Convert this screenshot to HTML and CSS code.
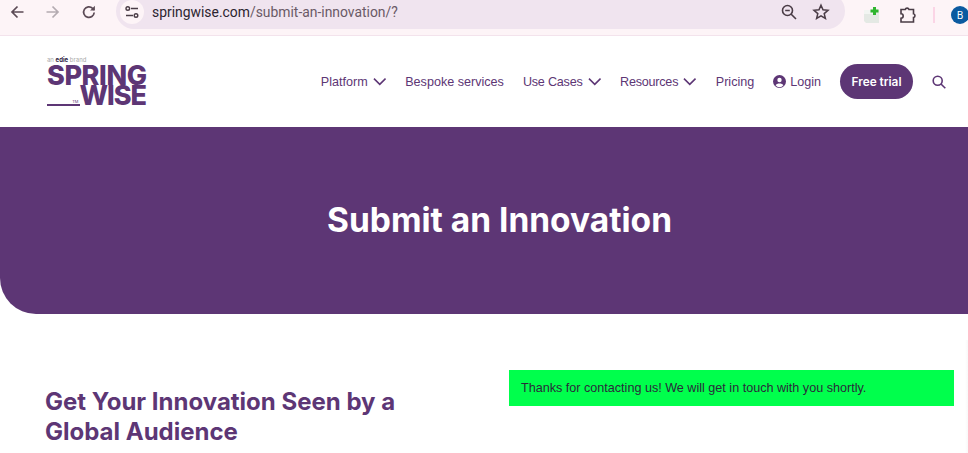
FILE: index.html
```html
<!DOCTYPE html>
<html>
<head>
  <title>Submit an Innovation</title>
  <link rel="stylesheet" href="styles.css">
</head>
<body>

  <!-- Browser toolbar -->
  <div class="toolbar">
    <svg class="tool-icon back" width="16" height="16" viewBox="0 0 16 16"><path d="M14.500 8H3M8.500 2.500 3 8l5.500 5.500" fill="none" stroke="#5b4a55" stroke-width="1.700"/></svg>
    <svg class="tool-icon forward" width="16" height="16" viewBox="0 0 16 16"><path d="M1.500 8H13M7.500 2.500 13 8l-5.500 5.500" fill="none" stroke="#b4abb1" stroke-width="1.700"/></svg>
    <svg class="tool-icon reload" width="16" height="16" viewBox="0 0 16 16"><path d="M13.200 8.500A5.300 5.300 0 1 1 11.600 4.300L13 5.800" fill="none" stroke="#5b4a55" stroke-width="1.700"/><path d="M13.900 1.800v4.800H9.100z" fill="#5b4a55"/></svg>
    <div class="address-bar">
      <span class="site-info">
        <svg width="16" height="16" viewBox="0 0 16 16"><g fill="none" stroke="#4a3c46" stroke-width="1.400"><path d="M7 4.500h7M2 11.500h7"/><circle cx="3.800" cy="4.500" r="1.800"/><circle cx="12" cy="11.500" r="1.800"/></g></svg>
      </span>
      <span class="url"><b>springwise.com</b>/submit-an-innovation/?</span>
      <svg class="bar-icon zoom-icon" width="18" height="18" viewBox="0 0 18 18"><g fill="none" stroke="#4a3c46" stroke-width="1.600"><circle cx="7.500" cy="7.500" r="5"/><path d="m11 11 5 5M5.200 7.500h4.600"/></g></svg>
      <svg class="bar-icon" width="18" height="18" viewBox="0 0 18 18"><path d="m9 2.200 2 4.600 5 .5-3.800 3.300 1.200 4.900L9 12.900l-4.400 2.600 1.200-4.900L2 7.300l5-.5z" fill="none" stroke="#4a3c46" stroke-width="1.500"/></svg>
    </div>
    <svg class="ext-icon" width="18" height="18" viewBox="0 0 18 18"><path d="M1 4h15v13H3l-2-2z" fill="#e4e9e4"/><path d="M1 4h9v4H1z" fill="#f2f5f2"/><path d="M10 1h3v2.500h2.500v3H13V9h-3V6.500H7.500v-3H10z" fill="#2fb52f"/></svg>
    <svg class="puzzle" width="18" height="18" viewBox="0 0 18 18"><path d="M2 3.500h4.200a2 2 0 0 1 3.800 0h4.500v4.300a1.900 1.900 0 0 1 0 3.700V16H2v-3.800a2.200 2.200 0 0 0 0-4.400z" fill="none" stroke="#4a3c46" stroke-width="1.600"/></svg>
    <span class="divider"></span>
    <span class="avatar">B</span>
  </div>

  <!-- Site header -->
  <header class="site-header">
    <a class="logo">
      <span class="logo-tag">an <b>edie</b> brand</span>
      <span class="logo-spring">SPRING</span>
      <span class="logo-bottom">
        <span class="logo-line"></span>
        <span class="logo-tm">TM</span>
        <span class="logo-wise">WISE</span>
      </span>
    </a>
    <nav class="main-nav">
      <a>Platform <svg class="chevron" width="13.500" height="9" viewBox="0 0 14 9"><path d="m1 1.500 6 6 6-6" fill="none" stroke="#5d3675" stroke-width="1.600"/></svg></a>
      <a>Bespoke services</a>
      <a class="tight">Use Cases <svg class="chevron" width="13.500" height="9" viewBox="0 0 14 9"><path d="m1 1.500 6 6 6-6" fill="none" stroke="#5d3675" stroke-width="1.600"/></svg></a>
      <a class="tight">Resources <svg class="chevron" width="13.500" height="9" viewBox="0 0 14 9"><path d="m1 1.500 6 6 6-6" fill="none" stroke="#5d3675" stroke-width="1.600"/></svg></a>
      <a>Pricing</a>
      <a class="login"><svg width="13" height="13" viewBox="0 0 13 13"><circle cx="6.500" cy="6.500" r="6.500" fill="#5d3675"/><circle cx="6.500" cy="5" r="2.200" fill="#fff"/><path d="M2.600 10.300c1-2.300 6.800-2.300 7.800 0a5 5 0 0 1-7.800 0z" fill="#fff"/></svg> Login</a>
      <a class="free-trial">Free trial</a>
      <svg class="search" width="14" height="14" viewBox="0 0 14 14"><g fill="none" stroke="#5d3675" stroke-width="1.600"><circle cx="5.700" cy="5.700" r="4.500"/><path d="m9 9 4.300 4.300"/></g></svg>
    </nav>
  </header>

  <section class="hero">
    <h1>Submit an Innovation</h1>
  </section>

  <main class="content">
    <h2>Get Your Innovation Seen by a Global Audience</h2>
    <div class="success">Thanks for contacting us! We will get in touch with you shortly.</div>
  </main>

  <!-- Faint shade of the overlay scrollbar -->
  <div class="scroll-shade"></div>

</body>
</html>
```

FILE: styles.css
```css
html, body {
  margin: 0;
  height: 100%;
  overflow: hidden;
}

body {
  font-family: Inter, Arial, sans-serif;
  background: #fff;
  color: #5d3675;
}

/* Browser toolbar */
.toolbar {
  display: flex;
  align-items: center;
  height: 35px;
  overflow: hidden;
  border-bottom: 1px solid #f3e3ec;
  background: #fdf4f7;
  padding-left: 9px;
}

.tool-icon {
  flex: none;
  margin-top: -11px;
}

.forward {
  margin-left: 20px;
}

.reload {
  margin-left: 20px;
}

.address-bar {
  display: flex;
  align-items: center;
  flex: none;
  width: 729px;
  height: 36px;
  margin: -13px 0 0 19px;
  border-radius: 18px;
  background: #f0e4ef;
  box-sizing: border-box;
  padding: 2px 15px 0 4px;
}

.site-info {
  display: flex;
  align-items: center;
  justify-content: center;
  width: 24px;
  height: 24px;
  border-radius: 50%;
  background: #fdf4f7;
  margin-right: 8px;
}

.url {
  flex: 1;
  font: 13.900px Roboto, Arial, sans-serif;
  color: #6a5a66;
}

.url b {
  font-weight: 400;
  color: #2c2430;
}

.bar-icon {
  margin-left: 14px;
}

.ext-icon {
  flex: none;
  margin: -6px 0 0 18px;
}

.puzzle {
  flex: none;
  margin: -6px 0 0 18px;
}

.divider {
  flex: none;
  width: 2px;
  height: 16px;
  margin: -6px 0 0 16px;
  background: #fbd5e6;
}

.avatar {
  display: flex;
  align-items: center;
  justify-content: center;
  flex: none;
  width: 18px;
  height: 18px;
  border-radius: 50%;
  margin: -6px 0 0 16px;
  background: #0b5aa0;
  color: #fff;
  font: 10px "Noto Sans", Arial, sans-serif;
}

/* Site header */
.site-header {
  display: flex;
  align-items: center;
  justify-content: space-between;
  height: 91px;
  padding: 0 22px 0 47px;
}

.logo {
  display: flex;
  flex-direction: column;
  width: 100px;
  margin-top: -1px;
}

.logo-tag {
  font-size: 6px;
  line-height: 8px;
  color: #a9a9a9;
}

.logo-tag b {
  color: #2d2140;
}

.logo-spring,
.logo-wise {
  font-family: Inter, Arial, sans-serif;
  font-weight: 800;
  font-size: 27px;
  line-height: 20px;
  white-space: nowrap;
}

.logo-spring {
  margin-top: 2px;
  letter-spacing: -0.400px;
}

.logo-bottom {
  display: flex;
  align-items: flex-end;
}

.logo-line {
  flex: none;
  width: 33px;
  height: 2px;
  background: #5d3675;
}

.logo-tm {
  flex: 1;
  font-size: 4px;
  line-height: 8px;
  margin-left: -9px;
  text-align: right;
}

.logo-wise {
  margin: 0 1px 0 1px;
  letter-spacing: -1px;
}

.main-nav {
  display: flex;
  align-items: center;
  gap: 19px;
  font-family: "Liberation Sans", Arial, sans-serif;
  font-size: 12.600px;
}

.main-nav a {
  display: flex;
  align-items: center;
  gap: 5px;
  white-space: nowrap;
}

.main-nav .tight {
  letter-spacing: -0.220px;
}

.main-nav .login {
  gap: 4px;
}

.main-nav .free-trial {
  height: 35px;
  padding: 0 11.500px;
  border-radius: 18px;
  background: #5d3675;
  color: #fff;
  font-family: Inter, Arial, sans-serif;
  font-size: 11.800px;
  font-weight: 600;
}

/* Hero */
.hero {
  display: flex;
  align-items: center;
  justify-content: center;
  height: 187px;
  padding-left: 31px;
  box-sizing: border-box;
  background: #5d3675;
  border-bottom-left-radius: 36px;
}

.hero h1 {
  margin: 0 0 1px;
  color: #fff;
  font-size: 33.500px;
  font-weight: 700;
}

/* Form area */
.content {
  display: grid;
  grid-template-columns: 464px 445px;
  align-items: start;
  padding: 56px 0 0 45px;
}

.content h2 {
  margin: 17px 0 0;
  width: 380px;
  font-size: 24px;
  line-height: 30px;
  font-weight: 700;
}

.success {
  padding: 10px 12px;
  height: 36px;
  box-sizing: border-box;
  background: #00ff4c;
  color: #2a2a3a;
  font-family: "Liberation Sans", Arial, sans-serif;
  font-size: 12.600px;
  line-height: 16px;
}

.scroll-shade {
  position: absolute;
  top: 340px;
  right: 0;
  bottom: 0;
  width: 3px;
  background: linear-gradient(to right, #fff, #f8f8f8);
}
```
